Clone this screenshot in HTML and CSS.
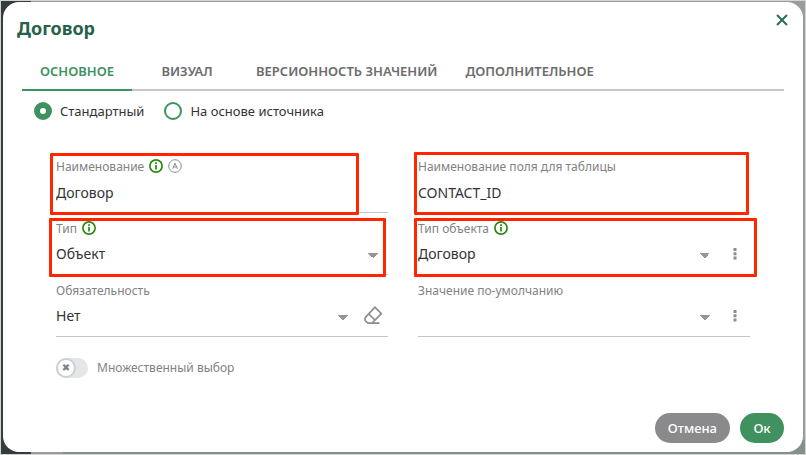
FILE: index.html
```
<!DOCTYPE html>
<html lang="ru">
<head>
  <meta charset="UTF-8">
  <meta name="viewport" content="width=device-width, initial-scale=1.0">
  <title>Договор</title>
  <link rel="stylesheet" href="styles.css">
</head>
<body>
  <div class="backdrop">
    <form class="dialog">
      <header class="dialog-header">
        <h1>Договор</h1>
        <button type="button" class="close-btn" aria-label="Закрыть">
          <svg width="12" height="12" viewBox="0 0 12 12"><path d="M1 1l10 10M11 1L1 11" stroke="currentColor" stroke-width="2" fill="none"/></svg>
        </button>
      </header>

      <nav class="tabs">
        <button type="button" class="tab active">ОСНОВНОЕ</button>
        <button type="button" class="tab">ВИЗУАЛ</button>
        <button type="button" class="tab">ВЕРСИОННОСТЬ ЗНАЧЕНИЙ</button>
        <button type="button" class="tab">ДОПОЛНИТЕЛЬНОЕ</button>
      </nav>

      <div class="radios">
        <label class="radio"><input type="radio" name="kind" checked>Стандартный</label>
        <label class="radio"><input type="radio" name="kind">На основе источника</label>
      </div>

      <div class="fields">
        <div class="field marked mark-name">
          <div class="field-label">
            <label for="name">Наименование</label>
            <svg class="info" width="14" height="14" viewBox="0 0 14 14"><circle cx="7" cy="7" r="6.1"/><path d="M7 6v4.6M7 3.2v1.7"/></svg>
            <svg class="auto" width="14" height="14" viewBox="0 0 14 14"><circle cx="7" cy="7" r="6.3"/><path d="M4.7 9.8L7 4.2l2.3 5.6M5.4 8h3.2"/></svg>
          </div>
          <div class="control"><input type="text" id="name" value="Договор"></div>
        </div>

        <div class="field marked mark-column">
          <div class="field-label"><label for="column">Наименование поля для таблицы</label></div>
          <div class="control"><input type="text" id="column" value="CONTACT_ID"></div>
        </div>

        <div class="field marked mark-type">
          <div class="field-label">
            <label for="type">Тип</label>
            <svg class="info" width="14" height="14" viewBox="0 0 14 14"><circle cx="7" cy="7" r="6.1"/><path d="M7 6v4.6M7 3.2v1.7"/></svg>
          </div>
          <div class="control">
            <select id="type"><option>Объект</option></select>
          </div>
        </div>

        <div class="field marked mark-object">
          <div class="field-label">
            <label for="object">Тип объекта</label>
            <svg class="info" width="14" height="14" viewBox="0 0 14 14"><circle cx="7" cy="7" r="6.1"/><path d="M7 6v4.6M7 3.2v1.7"/></svg>
          </div>
          <div class="control">
            <select id="object"><option>Договор</option></select>
            <button type="button" class="icon-btn" aria-label="Ещё">
              <svg width="4" height="12" viewBox="0 0 4 12"><path d="M.5 0h3v3h-3zM.5 4.2h3v3h-3zM.5 8.5h3v3h-3z" fill="currentColor"/></svg>
            </button>
          </div>
        </div>

        <div class="field">
          <div class="field-label"><label for="required">Обязательность</label></div>
          <div class="control">
            <select id="required"><option>Нет</option></select>
            <button type="button" class="icon-btn" aria-label="Очистить">
              <svg width="20" height="20" viewBox="0 0 20 20" fill="none" stroke="currentColor" stroke-width="1.7"><path d="M16.5 17.2H6.2C4.2 17.2 1.9 15.2 1.9 13c0-1 .5-1.7 1.2-2.4L12 1.2l6.3 6.5-9.2 9.3M5.8 8l6.2 6.2"/></svg>
            </button>
          </div>
        </div>

        <div class="field">
          <div class="field-label"><label for="default">Значение по-умолчанию</label></div>
          <div class="control">
            <select id="default"><option></option></select>
            <button type="button" class="icon-btn" aria-label="Ещё">
              <svg width="4" height="12" viewBox="0 0 4 12"><path d="M.5 0h3v3h-3zM.5 4.2h3v3h-3zM.5 8.5h3v3h-3z" fill="currentColor"/></svg>
            </button>
          </div>
        </div>
      </div>

      <label class="switch"><input type="checkbox">Множественный выбор</label>

      <footer class="dialog-footer">
        <button type="button" class="btn cancel">Отмена</button>
        <button type="button" class="btn ok">Ок</button>
      </footer>
    </form>
  </div>
</body>
</html>
```

FILE: styles.css
```
*, *::before, *::after {
  box-sizing: border-box;
}
body {
  margin: 0;
  font-family: "Noto Sans", "Open Sans", sans-serif;
  font-size: 13px;
  color: #333;
}
button, input, select {
  font: inherit;
  color: inherit;
  margin: 0;
}
button {
  border: none;
  background: none;
  padding: 0;
  cursor: pointer;
}
.backdrop {
  display: flex;
  min-height: 100vh;
  padding: 1px 2px 2px;
  border: 1px solid #d2d4d3;
  background: linear-gradient(90deg, #343c3e 30px, #9b9b9b 30px, #9b9b9b 62px, transparent 62px),
    linear-gradient(#9b9b9b 97%, #84918b 97%);
}
.dialog {
  flex: 1;
  display: flex;
  flex-direction: column;
  border-radius: 16px;
  background: #fff;
}
.dialog-header {
  display: flex;
  justify-content: space-between;
  align-items: flex-start;
  padding: 12px 15px 0 14px;
}
h1 {
  margin: 0;
  font-size: 18px;
  line-height: 28px;
  color: #286149;
}
.close-btn {
  display: flex;
  color: #286f55;
}
.tabs {
  display: flex;
  margin: 9px 19px 0;
  border-bottom: 2px solid #c8c8c8;
}
.tab {
  min-width: 110px;
  height: 40px;
  margin-bottom: -2px;
  padding: 2px 14px 0;
  border-bottom: 2px solid transparent;
  font-weight: 600;
  color: #6c6c6c;
  white-space: nowrap;
}
.tab.active {
  border-color: #3f925f;
  color: #3f925f;
}
.radios {
  display: flex;
  gap: 20px;
  padding: 10px 31px 0;
}
.radio {
  display: flex;
  align-items: center;
  gap: 8px;
  line-height: 20px;
}
.radio input {
  appearance: none;
  width: 18px;
  height: 18px;
  border: 2px solid #3f925f;
  border-radius: 50%;
}
.radio input:checked {
  border-width: 6px;
}
.fields {
  display: grid;
  grid-template-columns: 1fr 1fr;
  column-gap: 30px;
  padding: 30px 53px 0;
}
.field {
  position: relative;
  height: 62px;
  padding-top: 5px;
  border-bottom: 1px solid #c4c4c4;
}
.field-label {
  display: flex;
  align-items: center;
  gap: 5px;
  height: 20px;
  font-size: 12px;
  color: #828282;
}
.field-label svg {
  fill: none;
}
.info {
  stroke: #2a8a10;
  stroke-width: 1.7;
}
.auto {
  stroke: #8c8c8c;
  stroke-width: 1;
}
.control {
  display: flex;
  align-items: center;
  height: 32px;
  font-size: 14px;
}
.control input,
.control select {
  flex: 1;
  min-width: 0;
  height: 32px;
  padding: 0;
  border: none;
  outline: none;
  background: none;
}
.control select {
  appearance: none;
  padding-bottom: 2px;
  background: conic-gradient(from -45deg at 50% 100%, #959595 90deg, transparent 90deg) right 10px top 15px / 10px 5px no-repeat;
}
.icon-btn {
  display: flex;
  justify-content: center;
  width: 30px;
  color: #8c8c8c;
}
/* red frames drawn over the fields */
.marked::after {
  content: "";
  position: absolute;
  border: 3px solid #ff2600;
  border-radius: 1px;
  pointer-events: none;
}
.mark-name::after {
  inset: 2px 29px -3px -6px;
}
.mark-column::after {
  inset: 1px 1px -3px -4px;
}
.mark-type::after {
  inset: 5px 2px -3px -7px;
}
.mark-object::after {
  inset: 5px -7px -3px -4px;
}
.switch {
  display: flex;
  align-items: center;
  gap: 9px;
  padding: 21px 53px 0;
  font-size: 12px;
  line-height: 20px;
  color: #828282;
}
.switch input {
  appearance: none;
  width: 32px;
  height: 20px;
  margin: 0;
  border-radius: 10px;
  background: #e3e7e7;
}
.switch input::before {
  content: "✖";
  display: block;
  width: 20px;
  height: 20px;
  border: 2px solid #c9d1d3;
  border-radius: 50%;
  background: #fff;
  font: 10px/16px "DejaVu Sans", sans-serif;
  text-align: center;
}
.dialog-footer {
  display: flex;
  justify-content: flex-end;
  gap: 10px;
  margin-top: auto;
  padding: 0 19px 9px;
}
.btn {
  height: 30px;
  padding: 0 13px;
  border-radius: 15px;
  font-weight: 500;
  color: #fff;
}
.cancel {
  background: #8a8a8c;
}
.ok {
  min-width: 44px;
  background: #3f925f;
}
```
